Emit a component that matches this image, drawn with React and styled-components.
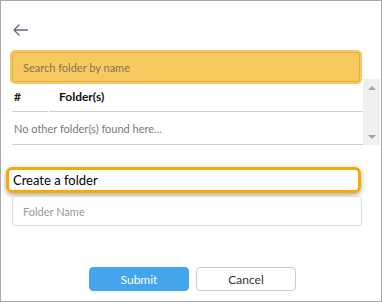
import React from 'react';
import styled, { createGlobalStyle } from 'styled-components';

const GlobalStyle = createGlobalStyle`
  html, body {
    margin: 0;
    padding: 0;
    background: #fff;
  }
  body {
    font-family: Lato, "Open Sans", Arial, sans-serif;
  }
  * {
    box-sizing: border-box;
  }
`;

const Frame = styled.div`
  width: 382px;
  height: 302px;
  border: 1px solid #a9a9a9;
  padding: 0 1px 0 11px;
  display: flex;
  flex-direction: column;
`;

const BackButton = styled.button`
  align-self: flex-start;
  border: 0;
  background: none;
  padding: 0;
  margin: 23px 0 0 1px;
  width: 15px;
  height: 12px;
  cursor: pointer;
  display: flex;
`;

const SearchInput = styled.input`
  width: 348px;
  height: 30px;
  margin-top: 16px;
  border: 1px solid #dcae4f;
  border-radius: 3px;
  background: #f7c95e;
  box-shadow: 0 0 0 2px #f7c95e;
  padding: 0 10px;
  font-family: inherit;
  font-size: 11px;
  color: #333;
  outline: none;

  &::placeholder {
    color: #86744f;
  }
`;

const ListArea = styled.div`
  display: flex;
`;

const Table = styled.div`
  width: 351px;
  display: flex;
  flex-direction: column;
`;

const HeaderRow = styled.div`
  display: flex;
  gap: 1px;
`;

const HeaderCell = styled.div`
  height: 30px;
  display: flex;
  align-items: center;
  padding-left: ${({ $pad }) => $pad}px;
  width: ${({ $width }) => ($width ? `${$width}px` : 'auto')};
  flex: ${({ $width }) => ($width ? 'none' : '1')};
  border-bottom: 1px solid #cfcfcf;
  font-weight: 700;
  font-size: 12px;
  color: #111;
`;

const EmptyRow = styled.div`
  height: 33px;
  display: flex;
  align-items: center;
  padding-left: 2px;
  border-bottom: 1px solid #cfcfcf;
  font-size: 11px;
  color: #7a7a7a;
`;

const Scrollbar = styled.div`
  width: 17px;
  margin-top: -3px;
  background: #f0f0f0;
  display: flex;
  flex-direction: column;
  justify-content: space-between;
  align-items: center;
  padding: 7px 0 6px;
`;

const Arrow = styled.span`
  width: 0;
  height: 0;
  border-left: 4px solid transparent;
  border-right: 4px solid transparent;
  ${({ $down }) =>
    $down ? 'border-top: 4px solid #a3a3a3;' : 'border-bottom: 4px solid #a3a3a3;'}
`;

const CreateLabel = styled.div`
  margin: 22px 0 0 -6px;
  width: 355px;
  height: 26px;
  border: 3px solid #f6ab00;
  border-radius: 6px;
  box-shadow: 0 2px 5px rgba(0, 0, 0, 0.35);
  padding-left: 4px;
  display: flex;
  align-items: center;
  font-size: 13px;
  color: #000;
`;

const NameInput = styled.input`
  width: 350px;
  height: 30px;
  margin-top: 3px;
  border: 1px solid #dcdcdc;
  border-radius: 3px;
  background: #fff;
  padding: 0 10px;
  font-family: inherit;
  font-size: 11px;
  outline: none;

  &::placeholder {
    color: #9a9a9a;
  }
`;

const Actions = styled.div`
  display: flex;
  justify-content: center;
  gap: 7px;
  margin-top: 41px;
  padding-right: 7px;
`;

const Button = styled.button`
  width: 100px;
  height: 24px;
  border-radius: 4px;
  font-family: inherit;
  font-size: 12px;
  cursor: pointer;
  border: 1px solid ${({ $primary }) => ($primary ? '#45a5ec' : '#cccccc')};
  background: ${({ $primary }) => ($primary ? '#45a5ec' : '#fff')};
  color: ${({ $primary }) => ($primary ? '#fff' : '#333')};
`;

function BackIcon() {
  return (
    <svg width="15" height="12" viewBox="0 0 15 12" fill="none">
      <path
        d="M14.5 6H1M6 1L1 6l5 5"
        stroke="#5e6e80"
        strokeWidth="1.4"
        strokeLinecap="round"
        strokeLinejoin="round"
      />
    </svg>
  );
}

function App() {
  return (
    <>
      <GlobalStyle />
      <Frame>
        <BackButton aria-label="Back">
          <BackIcon />
        </BackButton>

        <SearchInput placeholder="Search folder by name" />

        <ListArea>
          <Table>
            <HeaderRow>
              <HeaderCell $width={36} $pad={2}>#</HeaderCell>
              <HeaderCell $pad={10}>Folder(s)</HeaderCell>
            </HeaderRow>
            <EmptyRow>No other folder(s) found here...</EmptyRow>
          </Table>
          <Scrollbar>
            <Arrow />
            <Arrow $down />
          </Scrollbar>
        </ListArea>

        <CreateLabel>Create a folder</CreateLabel>
        <NameInput placeholder="Folder Name" />

        <Actions>
          <Button $primary>Submit</Button>
          <Button>Cancel</Button>
        </Actions>
      </Frame>
    </>
  );
}

export default App;
